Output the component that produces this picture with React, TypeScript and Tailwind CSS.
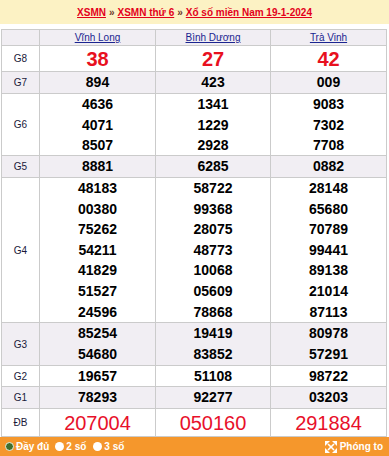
const provinces = ["Vĩnh Long", "Bình Dương", "Trà Vinh"];

type Row = {
  label: string;
  h: string;
  shaded?: boolean;
  big?: "g8" | "db";
  cols: string[][];
};

const rows: Row[] = [
  { label: "G8", h: "h-[26px]", big: "g8", cols: [["38"], ["27"], ["42"]] },
  { label: "G7", h: "h-[22px]", shaded: true, cols: [["894"], ["423"], ["009"]] },
  {
    label: "G6",
    h: "h-[62px]",
    cols: [
      ["4636", "4071", "8507"],
      ["1341", "1229", "2928"],
      ["9083", "7302", "7708"],
    ],
  },
  { label: "G5", h: "h-[22px]", shaded: true, cols: [["8881"], ["6285"], ["0882"]] },
  {
    label: "G4",
    h: "h-[145px]",
    cols: [
      ["48183", "00380", "75262", "54211", "41829", "51527", "24596"],
      ["58722", "99368", "28075", "48773", "10068", "05609", "78868"],
      ["28148", "65680", "70789", "99441", "89138", "21014", "87113"],
    ],
  },
  {
    label: "G3",
    h: "h-[43px]",
    shaded: true,
    cols: [
      ["85254", "54680"],
      ["19419", "83852"],
      ["80978", "57291"],
    ],
  },
  { label: "G2", h: "h-[21px]", cols: [["19657"], ["51108"], ["98722"]] },
  { label: "G1", h: "h-[22px]", shaded: true, cols: [["78293"], ["92277"], ["03203"]] },
  { label: "ĐB", h: "h-[28px]", big: "db", cols: [["207004"], ["050160"], ["291884"]] },
];

const grid = "grid grid-cols-[38px_116px_115px_115px] border-b border-[#cbcbcb]";

function Radio({ on }: { on?: boolean }) {
  return (
    <span
      className={
        on
          ? "w-[9px] h-[9px] rounded-full bg-[#3f6e2e] border-[1.5px] border-[#e8f0e0]"
          : "w-[9px] h-[9px] rounded-full bg-white"
      }
    />
  );
}

export default function App() {
  return (
    <div className="w-[389px] h-[456px] bg-white overflow-hidden font-['Liberation_Sans',Arial,sans-serif]">
      <div className="h-[24px] bg-[#fcf2c4] flex items-center justify-center text-[10px] font-bold text-[#e3001b]">
        <a className="underline">XSMN</a>
        <span className="mx-[3px] text-[#6b3a2a]">»</span>
        <a className="underline">XSMN thứ 6</a>
        <span className="mx-[3px] text-[#6b3a2a]">»</span>
        <a className="underline">Xổ số miền Nam 19-1-2024</a>
      </div>

      <div className="mt-[5px] ml-[1px] w-[386px] border-l border-r border-t border-[#cbcbcb]">
        <div className={`${grid} h-[16px] bg-[#f1eef3]`}>
          <div className="border-r border-[#cbcbcb]" />
          {provinces.map((p, i) => (
            <div
              key={p}
              className={`flex items-center justify-center text-[10px] text-[#1b2590] underline ${
                i < 2 ? "border-r border-[#cbcbcb]" : ""
              }`}
            >
              {p}
            </div>
          ))}
        </div>

        {rows.map((r) => (
          <div key={r.label} className={`${grid} ${r.h} ${r.shaded ? "bg-[#f1eef3]" : "bg-white"}`}>
            <div className="border-r border-[#cbcbcb] flex items-center justify-center text-[10px] text-[#1a1a3a]">
              {r.label}
            </div>
            {r.cols.map((c, i) => (
              <div
                key={i}
                className={`flex flex-col items-center justify-center ${i < 2 ? "border-r border-[#cbcbcb]" : ""}`}
              >
                {c.map((n) => (
                  <span
                    key={n}
                    className={
                      r.big === "g8"
                        ? "text-[20px] font-bold text-[#e8101e] leading-[24px]"
                        : r.big === "db"
                        ? "text-[20px] text-[#e8102a] leading-[26px]"
                        : "text-[14px] font-bold text-black leading-[20.6px]"
                    }
                  >
                    {n}
                  </span>
                ))}
              </div>
            ))}
          </div>
        ))}
      </div>

      <div className="h-[19px] bg-[#f5972c] flex items-center px-[5px] text-[10px] font-bold text-white">
        <Radio on />
        <span className="ml-[2px]">Đầy đủ</span>
        <span className="ml-[6px]" />
        <Radio />
        <span className="ml-[2px]">2 số</span>
        <span className="ml-[7px]" />
        <Radio />
        <span className="ml-[2px]">3 số</span>
        <div className="ml-auto flex items-center gap-[3px] pr-[1px]">
          <svg width="12" height="12" viewBox="0 0 12 12" fill="white" stroke="white" strokeWidth="1.6">
            <line x1="3" y1="3" x2="9" y2="9" />
            <line x1="9" y1="3" x2="3" y2="9" />
            <polygon points="0,0 5,0 0,5" stroke="none" />
            <polygon points="12,0 7,0 12,5" stroke="none" />
            <polygon points="0,12 5,12 0,7" stroke="none" />
            <polygon points="12,12 7,12 12,7" stroke="none" />
          </svg>
          <span>Phóng to</span>
        </div>
      </div>
    </div>
  );
}
